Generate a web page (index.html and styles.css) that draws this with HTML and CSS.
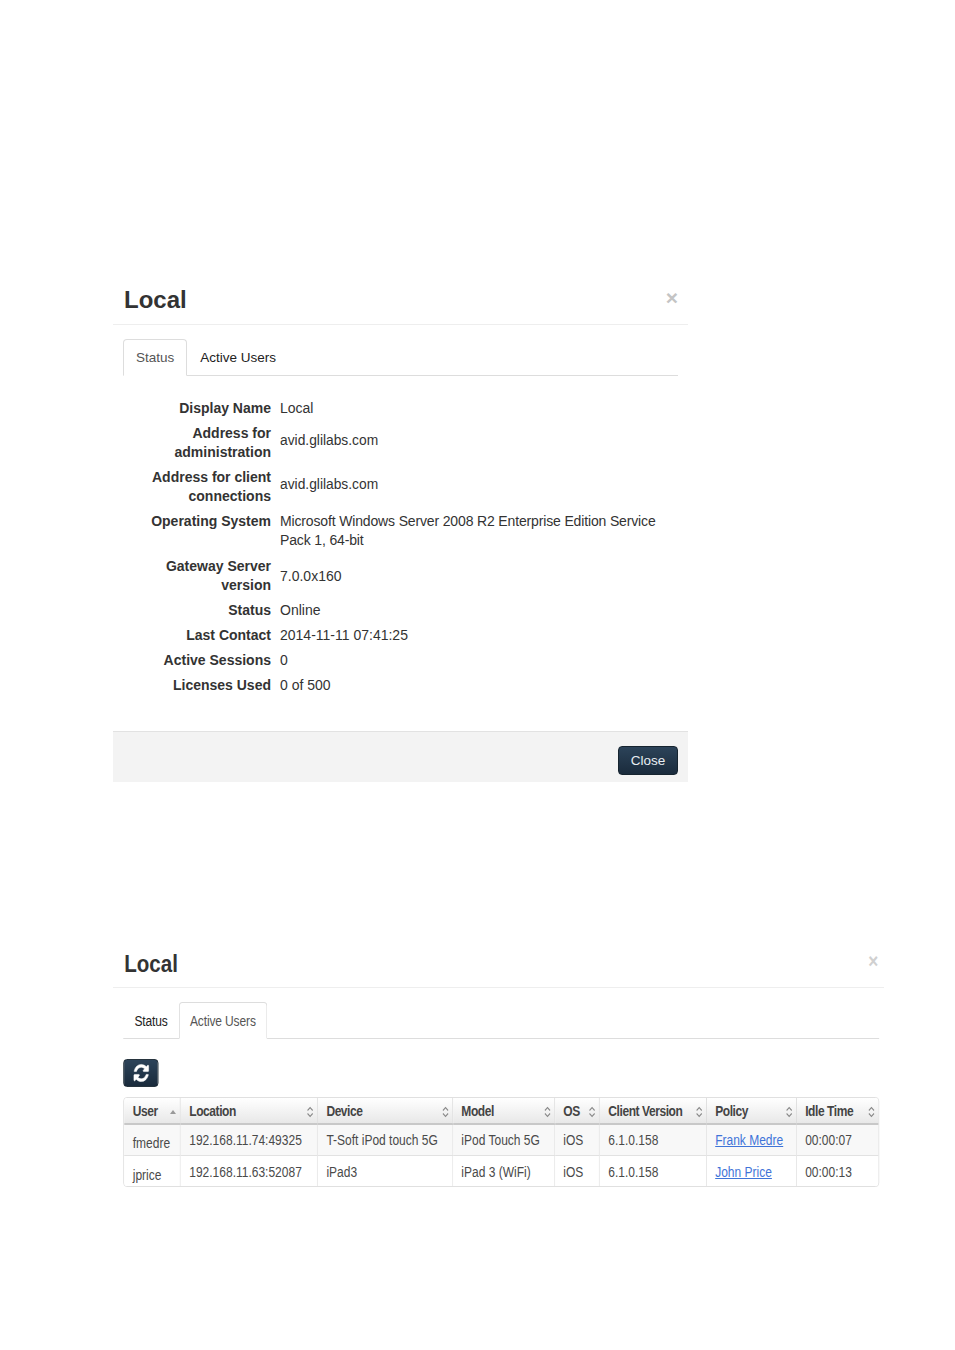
FILE: index.html
```html
<!DOCTYPE html>
<html lang="en">
<head>
<meta charset="utf-8">
<title>Local</title>
<link rel="stylesheet" href="styles.css">
</head>
<body>
<main class="sheet">
  <section class="dialog dialog-status">
    <header class="dialog-header">
      <h2 class="dialog-title">Local</h2>
      <span class="dialog-close">×</span>
    </header>
    <div class="dialog-body">
      <ul class="tabs">
        <li class="tab tab-active">Status</li>
        <li class="tab tab-dark">Active Users</li>
      </ul>
      <dl class="details">
        <dt>Display Name</dt><dd>Local</dd>
        <dt>Address for administration</dt><dd class="dd-raised">avid.glilabs.com</dd>
        <dt>Address for client connections</dt><dd class="dd-raised">avid.glilabs.com</dd>
        <dt>Operating System</dt><dd class="dd-long">Microsoft Windows Server 2008 R2 Enterprise Edition Service Pack 1, 64-bit</dd>
        <dt>Gateway Server version</dt><dd>7.0.0x160</dd>
        <dt>Status</dt><dd>Online</dd>
        <dt>Last Contact</dt><dd>2014-11-11 07:41:25</dd>
        <dt>Active Sessions</dt><dd>0</dd>
        <dt>Licenses Used</dt><dd>0 of 500</dd>
      </dl>
    </div>
    <footer class="dialog-footer">
      <button class="btn btn-close" type="button">Close</button>
    </footer>
  </section>

  <div class="squeeze-frame">
    <section class="dialog dialog-users">
      <header class="dialog-header">
        <h2 class="dialog-title">Local</h2>
        <span class="dialog-close dialog-close-light">×</span>
      </header>
      <div class="dialog-body dialog-body-users">
        <ul class="tabs">
          <li class="tab tab-dark">Status</li>
          <li class="tab tab-active">Active Users</li>
        </ul>
        <button class="btn btn-refresh" type="button" aria-label="Refresh">
          <svg class="refresh-icon" viewBox="0 0 1792 1792"><path fill="currentColor" stroke="currentColor" stroke-width="50" d="M1639 1056q0 5-1 7-64 268-268 434.5t-478 166.5q-146 0-282.5-55t-243.5-157l-129 129q-19 19-45 19t-45-19-19-45v-448q0-26 19-45t45-19h448q26 0 45 19t19 45-19 45l-137 137q71 66 161 102t187 36q134 0 250-65t186-179q11-17 53-117 8-23 30-23h192q13 0 22.5 9.5t9.5 22.5zm25-800v448q0 26-19 45t-45 19h-448q-26 0-45-19t-19-45 19-45l138-138q-148-137-349-137-134 0-250 65t-186 179q-11 17-53 117-8 23-30 23h-199q-13 0-22.5-9.5t-9.5-22.5v-7q65-268 270-434.5t480-166.5q146 0 284 55.5t245 156.5l130-129q19-19 45-19t45 19 19 45z"/></svg>
        </button>
        <div class="table-frame">
          <table class="users">
            <colgroup>
              <col class="c-user"><col class="c-location"><col class="c-device"><col class="c-model">
              <col class="c-os"><col class="c-client"><col class="c-policy"><col class="c-idle">
            </colgroup>
            <thead>
              <tr>
                <th><span class="th-in">User<svg class="sort" viewBox="0 0 10 14"><path d="M1.5 9 5 5l3.500 4z" fill="#999"/></svg></span></th>
                <th><span class="th-in">Location<svg class="sort" viewBox="0 0 10 14"><path d="M2 5.500 5 2.500l3 3M2 8.500l3 3 3-3" fill="none" stroke="#888" stroke-width="1.200"/></svg></span></th>
                <th><span class="th-in">Device<svg class="sort" viewBox="0 0 10 14"><path d="M2 5.500 5 2.500l3 3M2 8.500l3 3 3-3" fill="none" stroke="#888" stroke-width="1.200"/></svg></span></th>
                <th><span class="th-in">Model<svg class="sort" viewBox="0 0 10 14"><path d="M2 5.500 5 2.500l3 3M2 8.500l3 3 3-3" fill="none" stroke="#888" stroke-width="1.200"/></svg></span></th>
                <th><span class="th-in">OS<svg class="sort" viewBox="0 0 10 14"><path d="M2 5.500 5 2.500l3 3M2 8.500l3 3 3-3" fill="none" stroke="#888" stroke-width="1.200"/></svg></span></th>
                <th><span class="th-in">Client Version<svg class="sort" viewBox="0 0 10 14"><path d="M2 5.500 5 2.500l3 3M2 8.500l3 3 3-3" fill="none" stroke="#888" stroke-width="1.200"/></svg></span></th>
                <th><span class="th-in">Policy<svg class="sort" viewBox="0 0 10 14"><path d="M2 5.500 5 2.500l3 3M2 8.500l3 3 3-3" fill="none" stroke="#888" stroke-width="1.200"/></svg></span></th>
                <th><span class="th-in">Idle Time<svg class="sort" viewBox="0 0 10 14"><path d="M2 5.500 5 2.500l3 3M2 8.500l3 3 3-3" fill="none" stroke="#888" stroke-width="1.200"/></svg></span></th>
              </tr>
            </thead>
            <tbody>
              <tr class="row-odd">
                <td class="cell-user">fmedre</td><td>192.168.11.74:49325</td><td>T-Soft iPod touch 5G</td><td>iPod Touch 5G</td><td>iOS</td><td>6.1.0.158</td><td><a class="link" href="#">Frank Medre</a></td><td>00:00:07</td>
              </tr>
              <tr class="row-even">
                <td class="cell-user">jprice</td><td>192.168.11.63:52087</td><td>iPad3</td><td>iPad 3 (WiFi)</td><td>iOS</td><td>6.1.0.158</td><td><a class="link" href="#">John Price</a></td><td>00:00:13</td>
              </tr>
            </tbody>
          </table>
        </div>
      </div>
    </section>
  </div>
</main>
</body>
</html>
```
FILE: styles.css
```css
* { box-sizing: border-box; }
html, body { margin: 0; padding: 0; background: #fff; }
body {
  font-family: "Liberation Sans", Arial, sans-serif;
  font-size: 14px;
  line-height: 19px;
  color: #333;
}
.sheet { padding: 272px 0 0 113px; }

.dialog-status { width: 575px; }

.dialog-header {
  display: flex;
  justify-content: space-between;
  align-items: flex-start;
  height: 53px;
  padding: 0 10px;
  border-bottom: 1px solid #eee;
}
.dialog-title {
  margin: 11px 0 0 1px;
  font-size: 24px;
  line-height: 33px;
  font-weight: bold;
  color: #333;
}
.dialog-close {
  margin-top: 15px;
  font-size: 21px;
  line-height: 21px;
  font-weight: bold;
  color: #c4c4c4;
}
.dialog-close-light { color: #d0d0d0; }

.dialog-body { padding: 14px 10px 0; }
.tabs {
  display: flex;
  height: 37px;
  margin: 0;
  padding: 0;
  list-style: none;
  border-bottom: 1px solid #ddd;
}
.tab {
  height: 37px;
  padding: 9px 12px;
  border: 1px solid transparent;
  border-radius: 4px 4px 0 0;
  font-size: 13.500px;
  line-height: 18px;
}
.tab-active {
  color: #555;
  background: #fff;
  border-color: #ddd #ddd #fff;
}
.tab-dark { color: #222; }

.details {
  display: grid;
  grid-template-columns: 148px 1fr;
  column-gap: 9px;
  row-gap: 6px;
  margin: 23px 0 36px;
}
.details dt {
  text-align: right;
  font-weight: bold;
  color: #333;
}
.details dd {
  margin: 0;
  align-self: center;
  color: #333;
}
.details .dd-raised { padding-bottom: 5px; font-size: 13.800px; }
.details .dd-long { padding-bottom: 1px; letter-spacing: -0.150px; }

.dialog-footer {
  display: flex;
  justify-content: flex-end;
  align-items: flex-start;
  height: 51px;
  padding: 14px 10px 0;
  background: #f3f3f3;
  border-top: 1px solid #e2e2e2;
}
.btn {
  display: block;
  padding: 0;
  font-family: inherit;
  color: #fff;
  background: linear-gradient(#2c4359, #1a2b3c);
  border: 1px solid #16242f;
  border-radius: 4px;
}
.btn-close {
  width: 60px;
  height: 29px;
  padding-bottom: 1px;
  font-size: 13.500px;
  color: #e8edf2;
}

.squeeze-frame {
  width: 771px;
  margin-top: 153px;
  overflow: hidden;
}
.dialog-users {
  width: 900px;
  transform: scaleX(0.857);
  transform-origin: left top;
}
.dialog-users .dialog-title { margin: 12px 0 0 3px; }
.dialog-users .dialog-close { margin: 16px -3px 0 0; font-size: 20px; }
.dialog-body-users { padding: 14px 6px 0 12px; }
.dialog-users .tab {
  padding: 9px 12px;
  font-size: 14px;
  letter-spacing: -0.150px;
}

.btn-refresh {
  display: flex;
  align-items: center;
  justify-content: center;
  width: 41px;
  height: 28px;
  margin: 20px 0 10px;
}
.refresh-icon { width: 20px; height: 20px; color: #fff; }

.table-frame {
  width: 882px;
  height: 90px;
  border: 1px solid #ddd;
  border-radius: 4px;
  overflow: hidden;
}
.users {
  width: 100%;
  table-layout: fixed;
  border-collapse: separate;
  border-spacing: 0;
  font-size: 14px;
  color: #4a4a4a;
}
.c-user { width: 66px; }
.c-location { width: 160px; }
.c-device { width: 157.500px; }
.c-model { width: 119px; }
.c-os { width: 52.500px; }
.c-client { width: 124.700px; }
.c-policy { width: 105px; }
.c-idle { width: 97.300px; }

.users th {
  height: 27px;
  padding: 2px 3px 0 10px;
  text-align: left;
  font-size: 14px;
  letter-spacing: -0.500px;
  font-weight: bold;
  color: #444;
  background: linear-gradient(#fff, #e8e8e8);
  border-right: 1px solid #d8d8d8;
  border-bottom: 2px solid #c8c8c8;
}
.users th:last-child { padding-right: 5px; }
.users th:last-child, .users td:last-child { border-right: 0; }
.th-in {
  display: flex;
  align-items: center;
  justify-content: space-between;
}
.sort { flex: none; width: 10px; height: 14px; }

.users td {
  padding: 2px 10px 0;
  border-right: 1px solid #e2e2e2;
  white-space: nowrap;
}
.row-odd td {
  height: 31px;
  padding-top: 0;
  background: #f8f8f8;
  border-bottom: 1px solid #e2e2e2;
}
.row-even td { height: 30px; background: #fff; }
.users .cell-user { padding-top: 6px; }
.users .row-even .cell-user { padding-top: 8px; }
.link { color: #3f74d8; text-decoration: underline; }
```
